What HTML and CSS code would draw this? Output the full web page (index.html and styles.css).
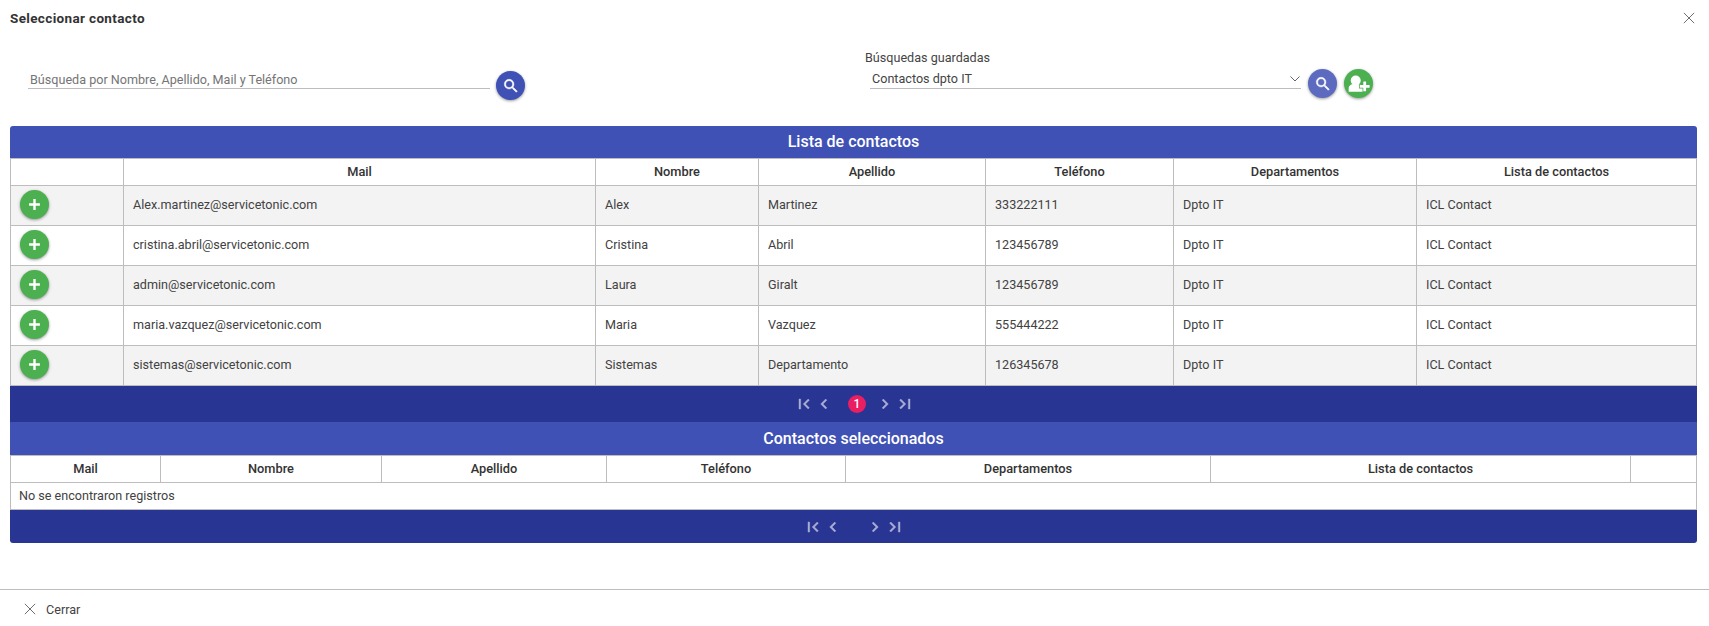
FILE: index.html
```html
<!DOCTYPE html>
<html lang="es">

<head>
    <meta charset="UTF-8">
    <meta name="viewport" content="width=device-width, initial-scale=1.0">
    <title>Seleccionar contacto</title>
    <link rel="stylesheet" href="styles.css">
</head>

<body>
    <svg class="sprites">
        <symbol id="i-search" viewBox="0 0 24 24"><path d="M15.5 14h-.79l-.28-.27A6.47 6.47 0 0 0 16 9.5 6.5 6.5 0 1 0 9.5 16c1.61 0 3.09-.59 4.23-1.57l.27.28v.79l5 4.99L20.49 19l-4.99-5zm-6 0C7.01 14 5 11.99 5 9.5S7.01 5 9.5 5 14 7.01 14 9.5 11.99 14 9.5 14z" stroke="#fff" stroke-width=".5"/></symbol>
        <symbol id="i-plus" viewBox="0 0 12 12"><path d="M1 4.900h3.900V1h2.200v3.900H11v2.200H7.100V11H4.900V7.100H1z"/></symbol>
        <symbol id="i-close" viewBox="0 0 14 14"><path d="M1 1l12 12M13 1L1 13" fill="none" stroke="currentColor" stroke-width="1.1"/></symbol>
        <symbol id="i-first" viewBox="0 0 24 24"><path d="M18.41 16.59L13.82 12l4.59-4.59L17 6l-6 6 6 6zM6 6h2v12H6z"/></symbol>
        <symbol id="i-prev" viewBox="0 0 24 24"><path d="M15.41 7.41L14 6l-6 6 6 6 1.41-1.41L10.83 12z"/></symbol>
        <symbol id="i-next" viewBox="0 0 24 24"><path d="M8.59 16.59L10 18l6-6-6-6-1.41 1.41L13.17 12z"/></symbol>
        <symbol id="i-last" viewBox="0 0 24 24"><path d="M5.59 7.41L10.18 12l-4.59 4.59L7 18l6-6-6-6zM16 6h2v12h-2z"/></symbol>
        <symbol id="i-useradd" viewBox="0 0 29 29">
            <circle cx="11.700" cy="11.500" r="5"/>
            <path d="M4.700 22.700v-3.700c0-2.700 3.200-4.200 7-4.200s7.300 1.500 7.300 4.200v3.700z"/>
            <path d="M19.300 12.500h2.800v3.500h3.500v2.800h-3.500v3.500h-2.800v-3.500h-3.500V16h3.500z" stroke="#4caf50" stroke-width="1.500" paint-order="stroke"/>
        </symbol>
    </svg>

    <div class="dialog">
        <header class="dialog-head">
            <h1>Seleccionar contacto</h1>
            <svg class="close-icon"><use href="#i-close"></use></svg>
        </header>

        <div class="filters">
            <div class="filter-search">
                <div class="field">Búsqueda por Nombre, Apellido, Mail y Teléfono</div>
                <button class="fab fab-indigo"><svg><use href="#i-search"></use></svg></button>
            </div>
            <div class="filter-saved">
                <div class="saved-box">
                    <label>Búsquedas guardadas</label>
                    <div class="field field-select">
                        <span>Contactos dpto IT</span>
                        <svg class="chevron" viewBox="0 0 10 6"><path d="M.5.5L5 5 9.500.5" fill="none" stroke="currentColor"/></svg>
                    </div>
                </div>
                <button class="fab fab-light"><svg><use href="#i-search"></use></svg></button>
                <button class="fab fab-green fab-useradd"><svg><use href="#i-useradd"></use></svg></button>
            </div>
        </div>

        <section class="panel">
            <div class="panel-title">Lista de contactos</div>
            <table class="grid grid-contacts">
                <thead>
                    <tr>
                        <th></th>
                        <th>Mail</th>
                        <th>Nombre</th>
                        <th>Apellido</th>
                        <th>Teléfono</th>
                        <th>Departamentos</th>
                        <th>Lista de contactos</th>
                    </tr>
                </thead>
                <tbody>
                    <tr>
                        <td><button class="fab fab-green"><svg><use href="#i-plus"></use></svg></button></td>
                        <td>Alex.martinez@servicetonic.com</td>
                        <td>Alex</td>
                        <td>Martinez</td>
                        <td>333222111</td>
                        <td>Dpto IT</td>
                        <td>ICL Contact</td>
                    </tr>
                    <tr>
                        <td><button class="fab fab-green"><svg><use href="#i-plus"></use></svg></button></td>
                        <td>cristina.abril@servicetonic.com</td>
                        <td>Cristina</td>
                        <td>Abril</td>
                        <td>123456789</td>
                        <td>Dpto IT</td>
                        <td>ICL Contact</td>
                    </tr>
                    <tr>
                        <td><button class="fab fab-green"><svg><use href="#i-plus"></use></svg></button></td>
                        <td>admin@servicetonic.com</td>
                        <td>Laura</td>
                        <td>Giralt</td>
                        <td>123456789</td>
                        <td>Dpto IT</td>
                        <td>ICL Contact</td>
                    </tr>
                    <tr>
                        <td><button class="fab fab-green"><svg><use href="#i-plus"></use></svg></button></td>
                        <td>maria.vazquez@servicetonic.com</td>
                        <td>Maria</td>
                        <td>Vazquez</td>
                        <td>555444222</td>
                        <td>Dpto IT</td>
                        <td>ICL Contact</td>
                    </tr>
                    <tr>
                        <td><button class="fab fab-green"><svg><use href="#i-plus"></use></svg></button></td>
                        <td>sistemas@servicetonic.com</td>
                        <td>Sistemas</td>
                        <td>Departamento</td>
                        <td>126345678</td>
                        <td>Dpto IT</td>
                        <td>ICL Contact</td>
                    </tr>
                </tbody>
            </table>
            <div class="pager pager-top">
                <svg><use href="#i-first"></use></svg>
                <svg><use href="#i-prev"></use></svg>
                <span class="page-current">1</span>
                <svg><use href="#i-next"></use></svg>
                <svg><use href="#i-last"></use></svg>
            </div>
        </section>

        <section class="panel">
            <div class="panel-title panel-title-second">Contactos seleccionados</div>
            <table class="grid grid-selected">
                <thead>
                    <tr>
                        <th>Mail</th>
                        <th>Nombre</th>
                        <th>Apellido</th>
                        <th>Teléfono</th>
                        <th>Departamentos</th>
                        <th>Lista de contactos</th>
                        <th></th>
                    </tr>
                </thead>
                <tbody>
                    <tr>
                        <td colspan="7" class="empty">No se encontraron registros</td>
                    </tr>
                </tbody>
            </table>
            <div class="pager pager-bottom">
                <svg><use href="#i-first"></use></svg>
                <svg><use href="#i-prev"></use></svg>
                <span class="page-empty"></span>
                <svg><use href="#i-next"></use></svg>
                <svg><use href="#i-last"></use></svg>
            </div>
        </section>

        <footer class="dialog-foot">
            <svg class="close-icon"><use href="#i-close"></use></svg>
            <span>Cerrar</span>
        </footer>
    </div>
</body>

</html>
```

FILE: styles.css
```css
* {
    box-sizing: border-box;
}

html,
body {
    margin: 0;
    height: 100%;
}

body {
    font-family: Roboto, "Liberation Sans", sans-serif;
    font-size: 12.6px;
    color: #424242;
    background: #fff;
    overflow: hidden;
}

.sprites {
    display: none;
}

.dialog {
    height: 626px;
    display: flex;
    flex-direction: column;
}

.dialog-head {
    height: 36px;
    padding: 0 14px 0 10px;
    display: flex;
    align-items: center;
    justify-content: space-between;
}

.dialog-head h1 {
    margin: 0;
    font-size: 13.5px;
    font-weight: 700;
    letter-spacing: .35px;
    color: #333;
}

.close-icon {
    width: 12px;
    height: 12px;
    color: #666;
}

.filters {
    height: 90px;
    display: flex;
    padding-left: 28px;
}

.filter-search {
    width: 838px;
    padding-top: 33px;
    display: flex;
    align-items: flex-start;
}

.field {
    width: 462px;
    height: 20px;
    line-height: 22px;
    padding-left: 2px;
    color: #757575;
    border-bottom: 1px solid #bdbdbd;
}

.fab {
    width: 29px;
    height: 29px;
    margin: 0;
    padding: 0;
    border: none;
    border-radius: 50%;
    color: #fff;
    fill: #fff;
    display: flex;
    align-items: center;
    justify-content: center;
    box-shadow: 0 1px 3px rgba(0, 0, 0, .4);
}

.fab svg {
    width: 18px;
    height: 18px;
}

.grid .fab svg {
    width: 13px;
    height: 13px;
}

.filter-search .fab {
    margin: 2px 0 0 6px;
}

.fab-indigo {
    background: #3f51b5;
}

.fab-light {
    background: #5c6bc0;
}

.fab-green {
    background: #4caf50;
}

.fab-useradd svg {
    width: 29px;
    height: 29px;
}

.filter-saved {
    display: flex;
    align-items: flex-start;
    padding-top: 14px;
}

.saved-box label {
    display: block;
    height: 19px;
    line-height: 15px;
    margin-left: -1px;
    color: #444;
}

.saved-box {
    width: 442px;
}

.field-select {
    width: 431px;
    margin-left: 4px;
    padding-top: 1px;
    padding-right: 1px;
    line-height: 20px;
    color: #444;
    display: flex;
    align-items: center;
    justify-content: space-between;
}

.chevron {
    width: 10px;
    height: 6px;
    color: #666;
}

.filter-saved .fab {
    margin: 19px 0 0 0;
}

.filter-saved .fab + .fab {
    margin-left: 7px;
}

.panel {
    margin: 0 12px 0 10px;
}

.panel-title {
    height: 32px;
    line-height: 32px;
    background: #3f51b5;
    color: #fff;
    font-size: 16px;
    font-weight: 500;
    text-align: center;
    border-radius: 3px 3px 0 0;
}

.panel-title-second {
    height: 33px;
    line-height: 33px;
    border-radius: 0;
}

.grid {
    width: 100%;
    border-collapse: collapse;
    table-layout: fixed;
}

.grid th,
.grid td {
    border: 1px solid #bdbdbd;
    padding: 0 9px 2px;
    text-align: left;
    color: #424242;
}

.grid th {
    height: 27px;
    font-size: 12.8px;
    font-weight: 500;
    color: #333;
    text-align: center;
    background: #fff;
}

.grid td {
    height: 40px;
}

.grid tbody tr:nth-child(odd) td {
    background: #f3f3f3;
}

.grid .empty,
.grid tbody tr:nth-child(odd) .empty {
    height: 27px;
    padding-left: 8px;
    background: #fff;
}

.grid-contacts th:nth-child(1) { width: 113px; }
.grid-contacts th:nth-child(2) { width: 472px; }
.grid-contacts th:nth-child(3) { width: 163px; }
.grid-contacts th:nth-child(4) { width: 227px; }
.grid-contacts th:nth-child(5) { width: 188px; }
.grid-contacts th:nth-child(6) { width: 243px; }

.grid-selected th:nth-child(1) { width: 150px; }
.grid-selected th:nth-child(2) { width: 221px; }
.grid-selected th:nth-child(3) { width: 225px; }
.grid-selected th:nth-child(4) { width: 239px; }
.grid-selected th:nth-child(5) { width: 365px; }
.grid-selected th:nth-child(6) { width: 420px; }

.pager {
    background: #283593;
    fill: #a9aed4;
    stroke: #a9aed4;
    stroke-width: .5px;
    display: flex;
    align-items: center;
    justify-content: center;
}

.pager svg {
    width: 20px;
    height: 20px;
}

.pager-top {
    height: 36px;
    padding-left: 2px;
}

.pager-bottom {
    height: 33px;
    padding-left: 1px;
    border-radius: 0 0 3px 3px;
}

.page-current {
    width: 18px;
    height: 18px;
    margin: 0 9px 0 14px;
    border-radius: 50%;
    background: #e91e63;
    color: #fff;
    stroke: none;
    font-size: 12px;
    font-weight: 500;
    line-height: 18px;
    text-align: center;
}

.page-empty {
    width: 22px;
}

.dialog-foot {
    margin-top: auto;
    height: 37px;
    border-top: 1px solid #bdbdbd;
    padding: 2px 0 0 24px;
    display: flex;
    align-items: center;
    gap: 10px;
    color: #444;
}
```
